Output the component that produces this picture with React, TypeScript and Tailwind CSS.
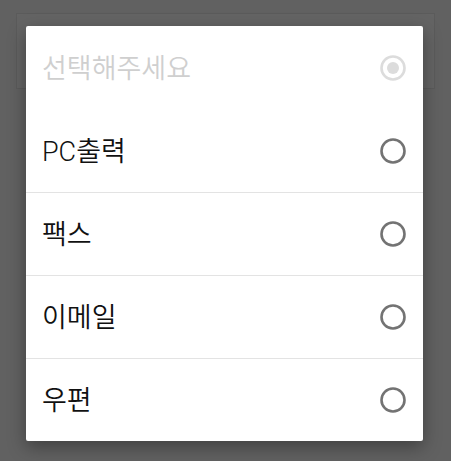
import React from 'react';

const options = [
  { label: '선택해주세요', disabled: true, checked: true },
  { label: 'PC출력' },
  { label: '팩스' },
  { label: '이메일' },
  { label: '우편' },
];

function Radio({ checked, disabled }: { checked?: boolean; disabled?: boolean }) {
  const ring = disabled ? '#dcdcdc' : '#737373';
  return (
    <svg width="28" height="28" viewBox="0 0 28 28" className="shrink-0">
      <circle cx="14" cy="14" r="11.5" fill="none" stroke={ring} strokeWidth="2.6" />
      {checked && <circle cx="14" cy="14" r="6" fill={ring} />}
    </svg>
  );
}

export default function App() {
  return (
    <div
      className="w-[451px] h-[461px] bg-[#616161] pt-[13px] px-[16px] overflow-hidden"
      style={{ fontFamily: 'Roboto, "Noto Sans CJK KR", "Noto Sans", sans-serif' }}
    >
      <div className="relative h-[76px] border border-[#5b5b5b] bg-[#646464]">
        <div className="absolute left-[9px] top-[12px] w-[397px] bg-white rounded-[2px] shadow-[0_6px_18px_rgba(0,0,0,0.35)]">
          {options.map((o, i) => (
            <div
              key={o.label}
              className={`flex items-center justify-between h-[83px] pl-[16px] pr-[16px] ${
                i > 1 ? 'border-t border-[#e3e3e3]' : ''
              }`}
            >
              <span
                className={`text-[27px] leading-none font-[350] pt-[3px] ${o.disabled ? 'text-[#cfcfcf]' : 'text-[#111111]'}`}
              >
                {o.label}
              </span>
              <Radio checked={o.checked} disabled={o.disabled} />
            </div>
          ))}
        </div>
      </div>
    </div>
  );
}
